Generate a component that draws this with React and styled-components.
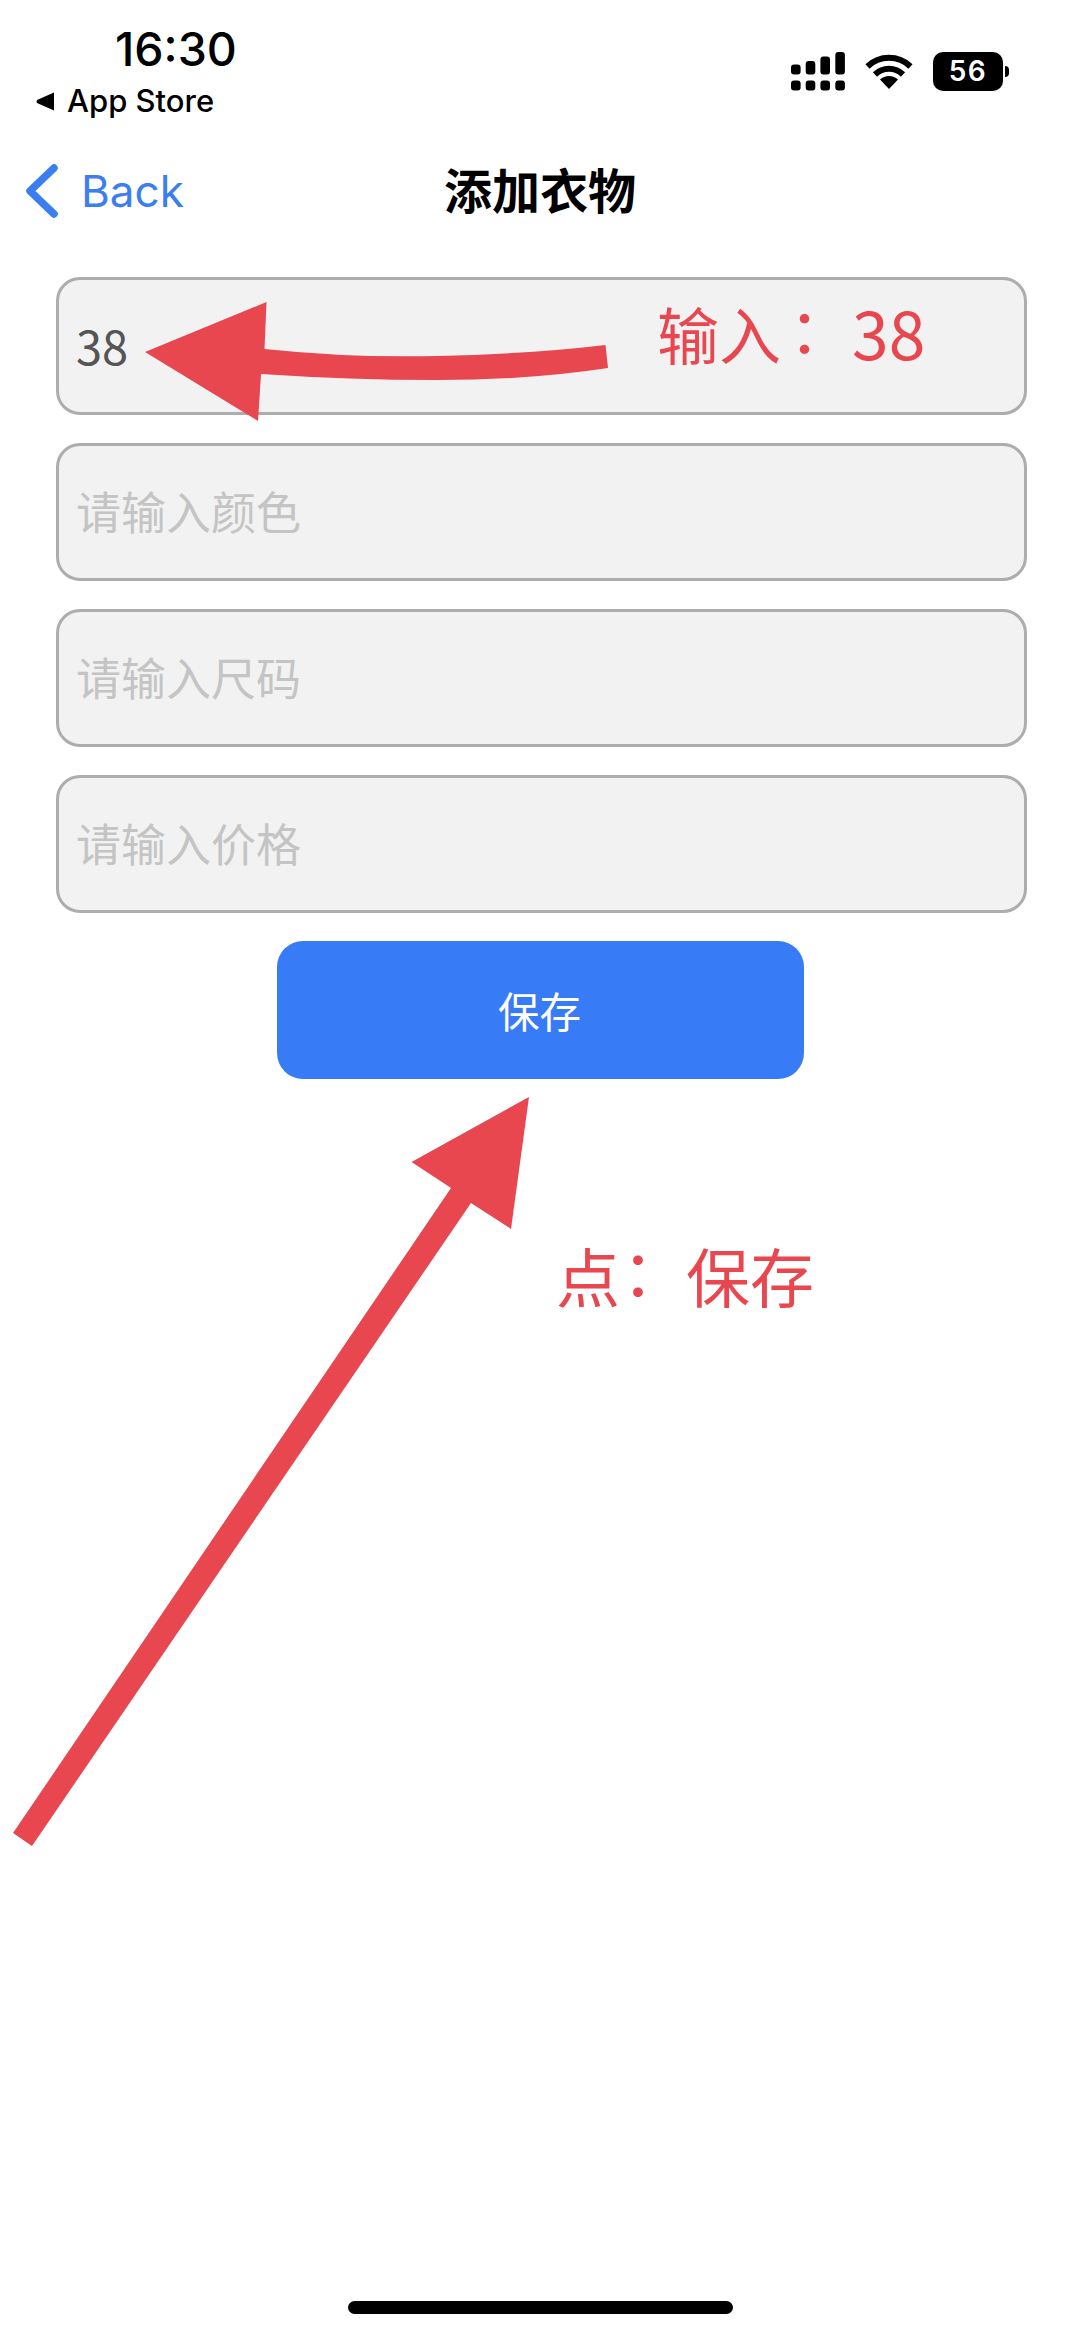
import React from "react";
import styled, { createGlobalStyle } from "styled-components";

const Global = createGlobalStyle`
  html, body { margin: 0; padding: 0; background: #fff; }
  * { box-sizing: border-box; }
`;

const LATIN = `Inter, "Noto Sans CJK SC", sans-serif`;
const CJK = `"Noto Sans CJK SC", sans-serif`;
const RED = "#e9474f";

const Page = styled.div`
  position: relative;
  width: 1080px;
  height: 2337px;
  display: flex;
  flex-direction: column;
  background: #fff;
  overflow: hidden;
  font-family: ${LATIN};
`;

const StatusBar = styled.div`
  height: 140px;
  display: flex;
  justify-content: space-between;
  align-items: flex-start;
  padding: 24px 77px 0 36px;
  color: #000;
`;

const StatusLeft = styled.div`
  display: flex;
  flex-direction: column;
`;

const Time = styled.div`
  font-size: 46.5px;
  line-height: 50px;
  font-weight: 500;
  margin-left: 79px;
`;

const BackToApp = styled.div`
  display: flex;
  align-items: center;
  gap: 12px;
  margin-top: 9px;
  font-size: 31px;
  line-height: 36px;
  font-weight: 500;
`;

const StatusIcons = styled.div`
  display: flex;
  align-items: flex-start;
  margin-top: 28px;
`;

const Battery = styled.div`
  position: relative;
  width: 70px;
  height: 39px;
  margin-left: 20px;
  border-radius: 10px;
  background: #000;
  color: #fff;
  font-size: 28px;
  font-weight: 600;
  letter-spacing: 1.5px;
  line-height: 39px;
  text-align: center;
  &::after {
    content: "";
    position: absolute;
    left: 72px;
    top: 14px;
    width: 4px;
    height: 11px;
    border-radius: 0 5px 5px 0;
    background: #000;
  }
`;

const NavBar = styled.div`
  height: 110px;
  display: grid;
  grid-template-columns: 1fr auto 1fr;
  align-items: center;
  padding: 0 26px 8px;
`;

const BackLink = styled.div`
  display: flex;
  align-items: center;
  gap: 23px;
  color: #3b7ef0;
  font-size: 44px;
  line-height: 52px;
`;

const Title = styled.div`
  font-family: ${CJK};
  font-size: 48px;
  font-weight: 700;
  line-height: 60px;
  margin-top: -6px;
  color: #000;
`;

const Form = styled.div`
  display: flex;
  flex-direction: column;
  gap: 28px;
  padding: 27px 53px 0 56px;
`;

const Field = styled.div`
  height: 138px;
  display: flex;
  align-items: center;
  padding: 0 17px 3px;
  background: #f2f2f2;
  border: 3px solid #adadad;
  border-radius: 24px;
  font-family: ${CJK};
  font-size: ${(p) => (p.$empty ? 45 : 47)}px;
  color: ${(p) => (p.$empty ? "#c4c4c4" : "#555")};
`;

const SaveButton = styled.div`
  align-self: center;
  width: 527px;
  height: 138px;
  margin-right: 2px;
  display: flex;
  align-items: center;
  justify-content: center;
  padding-right: 2px;
  background: #387bf7;
  border-radius: 26px;
  color: #fff;
  font-family: ${CJK};
  font-size: 41.5px;
`;

const HomeBar = styled.div`
  align-self: center;
  width: 385px;
  height: 13px;
  margin: auto 0 23px 1px;
  border-radius: 7px;
  background: #000;
`;

const ArrowLayer = styled.svg`
  position: absolute;
  left: 0;
  top: 0;
  pointer-events: none;
`;

const Note = styled.div`
  position: absolute;
  left: ${(p) => p.$x}px;
  top: ${(p) => p.$y}px;
  white-space: nowrap;
  font-family: ${CJK};
  font-size: ${(p) => p.$size}px;
  line-height: ${(p) => p.$size}px;
  color: ${RED};
`;

const NoteColon = styled.span`
  position: relative;
  top: -6px;
  margin-left: ${(p) => p.$before}px;
`;

const NoteNumber = styled.span`
  font-size: 66px;
  margin-left: 1px;
`;

function SignalIcon() {
  const xs = [0, 14.7, 29.4, 44.3];
  const tops = [12.4, 9, 4.4, 0];
  return (
    <svg width="54" height="39" viewBox="0 0 54 39" fill="#000">
      {xs.map((x, i) => (
        <g key={x}>
          <rect x={x} y={tops[i]} width="9.6" height={22.4 - tops[i]} rx="3" />
          <rect x={x} y="28.6" width="9.6" height="10" rx="3" />
        </g>
      ))}
    </svg>
  );
}

function WifiIcon() {
  return (
    <svg width="48" height="36" viewBox="0 0 48 36" style={{ marginLeft: 20, marginTop: 2 }}>
      <path d="M2.5 12.5 A31 31 0 0 1 45.5 12.5" fill="none" stroke="#000" strokeWidth="6" strokeLinecap="butt" />
      <path d="M10 20.5 A20 20 0 0 1 38 20.5" fill="none" stroke="#000" strokeWidth="6" strokeLinecap="butt" />
      <path d="M24 35 L15 25.5 A13 13 0 0 1 33 25.5 Z" fill="#000" />
    </svg>
  );
}

export default function App() {
  return (
    <Page>
      <Global />
      <StatusBar>
        <StatusLeft>
          <Time>16:30</Time>
          <BackToApp>
            <svg width="19" height="19" viewBox="0 0 19 19">
              <path d="M18 0.5 V18.5 L1 11 Q0 9.5 1 8 Z" fill="#000" />
            </svg>
            App Store
          </BackToApp>
        </StatusLeft>
        <StatusIcons>
          <SignalIcon />
          <WifiIcon />
          <Battery>56</Battery>
        </StatusIcons>
      </StatusBar>
      <NavBar>
        <BackLink>
          <svg width="32" height="54" viewBox="0 0 32 54">
            <path d="M28 4 L4 27 L28 50" fill="none" stroke="#3b7ef0" strokeWidth="7.5" strokeLinecap="round" strokeLinejoin="round" />
          </svg>
          Back
        </BackLink>
        <Title>添加衣物</Title>
        <span />
      </NavBar>
      <Form>
        <Field>38</Field>
        <Field $empty>请输入颜色</Field>
        <Field $empty>请输入尺码</Field>
        <Field $empty>请输入价格</Field>
        <SaveButton>保存</SaveButton>
      </Form>
      <HomeBar />
      <ArrowLayer width="1080" height="2337" viewBox="0 0 1080 2337" fill={RED}>
        <path d="M145 352 L266.5 302 L264.5 349 Q350 358 437 356 Q530 354 605.5 345 L608 368 Q530 380 437 380 Q350 380 261 374 L258 421 Z" />
        <path d="M529 1097 L411.5 1162 L451 1188 L13 1833 L32 1846 L471 1203 L511 1229 Z" />
      </ArrowLayer>
      <Note $x={657} $y={300} $size={62}>
        输入<NoteColon $before={8}>：</NoteColon><NoteNumber>38</NoteNumber>
      </Note>
      <Note $x={556} $y={1242} $size={64}>
        点<NoteColon $before={2}>：</NoteColon>保存
      </Note>
    </Page>
  );
}
